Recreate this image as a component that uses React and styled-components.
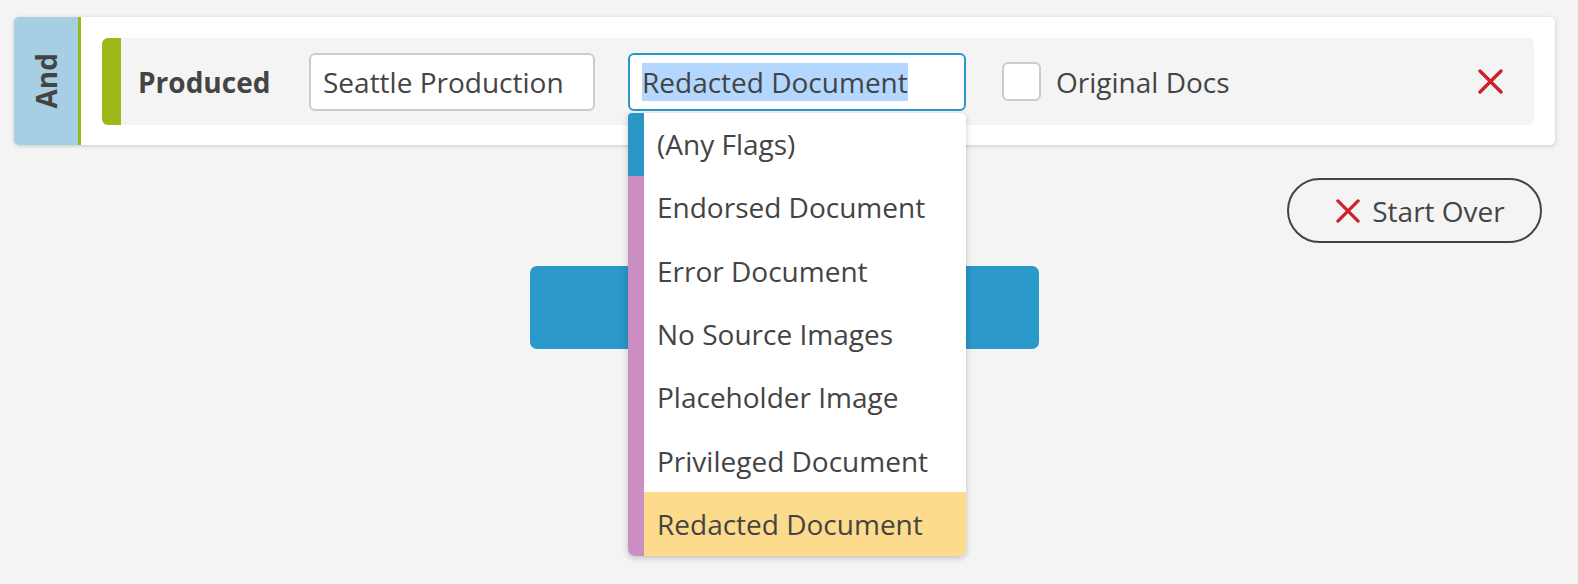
import React from 'react'
import styled, { createGlobalStyle } from 'styled-components'

const GlobalStyle = createGlobalStyle`
  html, body {
    margin: 0;
    background: #f4f4f4;
    font-family: "Open Sans", "Liberation Sans", sans-serif;
    color: #444;
  }
`

const flags = [
  { label: '(Any Flags)', stripe: '#2a97c6' },
  { label: 'Endorsed Document', stripe: '#cc8fc4' },
  { label: 'Error Document', stripe: '#cc8fc4' },
  { label: 'No Source Images', stripe: '#cc8fc4' },
  { label: 'Placeholder Image', stripe: '#cc8fc4' },
  { label: 'Privileged Document', stripe: '#cc8fc4' },
  { label: 'Redacted Document', stripe: '#cc8fc4', active: true },
]

const CrossIcon = ({ size = 25 }) => (
  <svg width={size} height={size} viewBox="0 0 25 25">
    <path d="M2 2 L23 23 M23 2 L2 23" stroke="#cc2229" strokeWidth="3.4" strokeLinecap="round" fill="none" />
  </svg>
)

const App = () => {
  return (
    <Page>
      <GlobalStyle />
      <Card>
        <AndTab><span>And</span></AndTab>
        <CardBody>
          <Row>
            <Label>Produced</Label>
            <TextBox>Seattle Production</TextBox>
            <SelectWrap>
              <SelectBox>
                <Selected>Redacted Document</Selected>
              </SelectBox>
              <Menu>
                {flags.map(f => (
                  <MenuItem key={f.label} $stripe={f.stripe} $active={f.active}>
                    {f.label}
                  </MenuItem>
                ))}
              </Menu>
            </SelectWrap>
            <Check />
            <CheckLabel>Original Docs</CheckLabel>
            <RemoveButton><CrossIcon size={25} /></RemoveButton>
          </Row>
        </CardBody>
      </Card>
      <Actions>
        <StartOver><CrossIcon size={24} /> Start Over</StartOver>
      </Actions>
      <SearchBar>
        <SearchButton />
      </SearchBar>
    </Page>
  )
}

export default App

const Page = styled.div`
  min-height: 584px;
  box-sizing: border-box;
  padding: 17px 23px 0 14px;
`

const Card = styled.div`
  display: flex;
  height: 128px;
  background: #fff;
  border-radius: 5px;
  box-shadow: 0 1px 4px rgba(0, 0, 0, 0.18);
`

const AndTab = styled.div`
  width: 64px;
  flex: none;
  background: #a7cfe3;
  border-right: 3px solid #9ab81a;
  border-radius: 5px 0 0 5px;
  display: flex;
  align-items: center;
  justify-content: center;

  span {
    writing-mode: vertical-rl;
    transform: rotate(180deg);
    font-weight: 700;
    font-size: 28px;
    color: #444;
  }
`

const CardBody = styled.div`
  flex: 1;
  padding: 21px 21px 20px 21px;
`

const Row = styled.div`
  display: flex;
  align-items: center;
  height: 87px;
  background: #f4f4f4;
  border-left: 19px solid #9cb81b;
  border-radius: 6px;
  font-size: 28px;
`

const Label = styled.div`
  width: 188px;
  flex: none;
  padding-left: 17px;
  box-sizing: border-box;
  font-weight: 700;
`

const TextBox = styled.div`
  width: 286px;
  height: 58px;
  flex: none;
  box-sizing: border-box;
  border: 2px solid #ccc;
  border-radius: 6px;
  background: #fff;
  display: flex;
  align-items: center;
  padding-left: 12px;
  white-space: nowrap;
`

const SelectWrap = styled.div`
  position: relative;
  margin-left: 33px;
  width: 338px;
  flex: none;
`

const SelectBox = styled(TextBox)`
  width: 100%;
  border-color: #2b97c6;
`

const Selected = styled.span`
  background: #b3d7fe;
  line-height: 38px;
`

const Menu = styled.div`
  position: absolute;
  z-index: 10;
  top: 60px;
  left: 0;
  right: 0;
  background: #fff;
  border-radius: 4px 6px 7px 7px;
  overflow: hidden;
  box-shadow: 0 2px 6px rgba(0, 0, 0, 0.22);
`

const MenuItem = styled.div`
  height: 63.3px;
  display: flex;
  align-items: center;
  padding-left: 13px;
  border-left: 16px solid ${p => p.$stripe};
  background: ${p => (p.$active ? '#fcdc8c' : '#fff')};
  white-space: nowrap;
`

const Check = styled.div`
  margin-left: 36px;
  width: 39px;
  height: 39px;
  flex: none;
  box-sizing: border-box;
  border: 2px solid #ccc;
  border-radius: 6px;
  background: #fff;
`

const CheckLabel = styled.div`
  margin-left: 15px;
`

const RemoveButton = styled.div`
  margin-left: auto;
  margin-right: 31px;
  display: flex;
`

const Actions = styled.div`
  display: flex;
  justify-content: flex-end;
  margin-top: 33px;
  padding-right: 13px;
`

const StartOver = styled.div`
  width: 255px;
  height: 65px;
  box-sizing: border-box;
  border: 2px solid #444;
  border-radius: 33px;
  display: flex;
  align-items: center;
  justify-content: center;
  gap: 12px;
  font-size: 28px;
  padding-left: 12px;
`

const SearchBar = styled.div`
  display: flex;
  justify-content: center;
  margin-top: 23px;
`

const SearchButton = styled.div`
  width: 509px;
  height: 83px;
  background: #2a98c8;
  border-radius: 7px;
`
